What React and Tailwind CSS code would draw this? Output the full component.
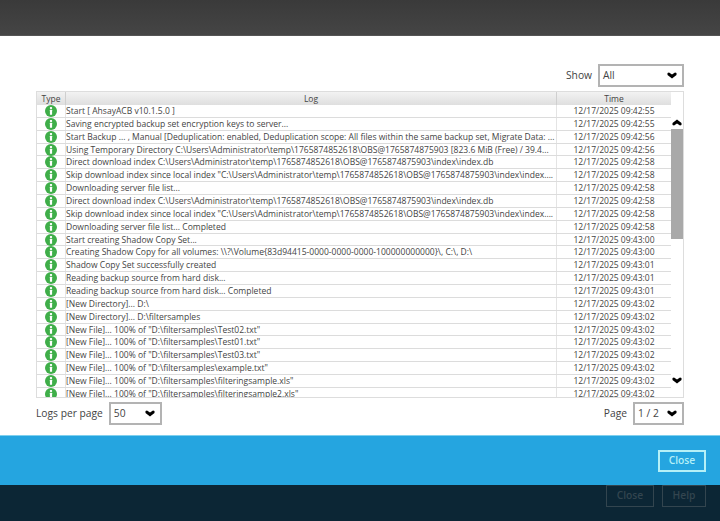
import React from "react";

const rows = [
  ["Start [ AhsayACB v10.1.5.0 ]", "12/17/2025 09:42:55"],
  ["Saving encrypted backup set encryption keys to server...", "12/17/2025 09:42:55"],
  ["Start Backup ... , Manual [Deduplication: enabled, Deduplication scope: All files within the same backup set, Migrate Data: ...", "12/17/2025 09:42:56"],
  ["Using Temporary Directory C:\\Users\\Administrator\\temp\\1765874852618\\OBS@1765874875903 [823.6 MiB (Free) / 39.4...", "12/17/2025 09:42:56"],
  ["Direct download index C:\\Users\\Administrator\\temp\\1765874852618\\OBS@1765874875903\\index\\index.db", "12/17/2025 09:42:58"],
  ["Skip download index since local index \"C:\\Users\\Administrator\\temp\\1765874852618\\OBS@1765874875903\\index\\index....", "12/17/2025 09:42:58"],
  ["Downloading server file list...", "12/17/2025 09:42:58"],
  ["Direct download index C:\\Users\\Administrator\\temp\\1765874852618\\OBS@1765874875903\\index\\index.db", "12/17/2025 09:42:58"],
  ["Skip download index since local index \"C:\\Users\\Administrator\\temp\\1765874852618\\OBS@1765874875903\\index\\index....", "12/17/2025 09:42:58"],
  ["Downloading server file list... Completed", "12/17/2025 09:42:58"],
  ["Start creating Shadow Copy Set...", "12/17/2025 09:43:00"],
  ["Creating Shadow Copy for all volumes: \\\\?\\Volume{83d94415-0000-0000-0000-100000000000}\\, C:\\, D:\\", "12/17/2025 09:43:00"],
  ["Shadow Copy Set successfully created", "12/17/2025 09:43:01"],
  ["Reading backup source from hard disk...", "12/17/2025 09:43:01"],
  ["Reading backup source from hard disk... Completed", "12/17/2025 09:43:01"],
  ["[New Directory]... D:\\", "12/17/2025 09:43:02"],
  ["[New Directory]... D:\\filtersamples", "12/17/2025 09:43:02"],
  ["[New File]... 100% of \"D:\\filtersamples\\Test02.txt\"", "12/17/2025 09:43:02"],
  ["[New File]... 100% of \"D:\\filtersamples\\Test01.txt\"", "12/17/2025 09:43:02"],
  ["[New File]... 100% of \"D:\\filtersamples\\Test03.txt\"", "12/17/2025 09:43:02"],
  ["[New File]... 100% of \"D:\\filtersamples\\example.txt\"", "12/17/2025 09:43:02"],
  ["[New File]... 100% of \"D:\\filtersamples\\filteringsample.xls\"", "12/17/2025 09:43:02"],
  ["[New File]... 100% of \"D:\\filtersamples\\filteringsample2.xls\"", "12/17/2025 09:43:02"],
];

const InfoIcon = () => (
  <svg width="12" height="12" viewBox="0 0 12 12" className="shrink-0">
    <circle cx="6" cy="6" r="6" fill="#3fae49" />
    <rect x="4.9" y="2" width="2.2" height="1.9" rx="0.6" fill="#fff" />
    <rect x="4.9" y="4.8" width="2.2" height="5" rx="0.5" fill="#fff" />
  </svg>
);

const Chevron = ({ up }) => (
  <svg width="10" height="7" viewBox="0 0 10 7" className={up ? "rotate-180" : ""}>
    <path d="M0.5 1 L2 0.4 L5 2.6 L8 0.4 L9.5 1 L9.5 3 L5 6.4 L0.5 3 Z" fill="#000" />
  </svg>
);

const Select = ({ value, className }) => (
  <div className={`flex items-center justify-between h-[23px] border-2 border-[#b3b3b3] bg-white pl-[3px] pr-[5px] ${className}`}>
    <span className="text-[10.25px] text-[#444]">{value}</span>
    <Chevron />
  </div>
);

const App = () => {
  return (
    <div className="w-[720px] h-[521px] flex flex-col overflow-hidden bg-white text-[#444] font-['Open_Sans',sans-serif]">
      <div className="h-[36px] shrink-0 bg-gradient-to-b from-[#3a3a3a] to-[#454545] border-b border-[#555]" />

      <div className="h-[399px] shrink-0 flex flex-col px-[36px] pt-[28px]">
        <div className="flex items-center justify-end gap-[6px] h-[23px]">
          <span className="text-[10.25px]">Show</span>
          <Select value="All" className="w-[86px]" />
        </div>

        <div className="flex h-[307px] mt-[4px] border border-[#ddd] overflow-hidden">
          <div className="w-[634px] shrink-0">
            <div className="flex h-[13px] bg-gradient-to-b from-[#f2f2f2] to-[#dfdfdf] text-[8.5px] leading-[13px] text-center">
              <div className="w-[29px] shrink-0 border-r border-[#cfcfcf]">Type</div>
              <div className="w-[491px] shrink-0 border-r border-[#cfcfcf]">Log</div>
              <div className="flex-1">Time</div>
            </div>
            {rows.map(([log, time], i) => (
              <div key={i} className="flex h-[12.86px] items-center border-b border-[#dcdcdc] text-[8.54px] leading-[12px] whitespace-nowrap">
                <div className="w-[29px] h-full shrink-0 flex items-center justify-center border-r border-[#e4e4e4]">
                  <InfoIcon />
                </div>
                <div className="w-[491px] h-full shrink-0 border-r border-[#e4e4e4] overflow-hidden">{log}</div>
                <div className="flex-1 text-center">{time}</div>
              </div>
            ))}
          </div>
          <div className="flex-1 flex flex-col items-center">
            <div className="h-[37px] w-full flex items-end justify-center pb-[3px]">
              <Chevron up />
            </div>
            <div className="h-[110px] w-full bg-[#a9a9a9]" />
            <div className="h-[158px] w-full flex items-end justify-center pb-[13px]">
              <Chevron />
            </div>
          </div>
        </div>

        <div className="flex items-center justify-between h-[23px] mt-[4px]">
          <div className="flex items-center gap-[6px]">
            <span className="text-[10.25px]">Logs per page</span>
            <Select value="50" className="w-[53px]" />
          </div>
          <div className="flex items-center gap-[6px]">
            <span className="text-[10.25px]">Page</span>
            <Select value="1 / 2" className="w-[51px]" />
          </div>
        </div>
      </div>

      <div className="h-[50px] shrink-0 flex items-center justify-end pr-[14px] bg-[#25a5e0] border-t border-[#7fd0ee]">
        <div className="w-[48px] h-[22px] flex items-center justify-center border-2 border-[#b5f0f7] text-[10.25px] font-semibold text-[#b5f0f7]">
          Close
        </div>
      </div>

      <div className="flex-1 flex justify-end gap-[8px] pr-[14px] bg-[#0c2635]">
        <div className="w-[48px] h-[22px] flex items-center justify-center border border-[#33454f] text-[10.25px] font-semibold text-[#33454f]">Close</div>
        <div className="w-[44px] h-[22px] flex items-center justify-center border border-[#33454f] text-[10.25px] font-semibold text-[#33454f]">Help</div>
      </div>
    </div>
  );
};

export default App;
